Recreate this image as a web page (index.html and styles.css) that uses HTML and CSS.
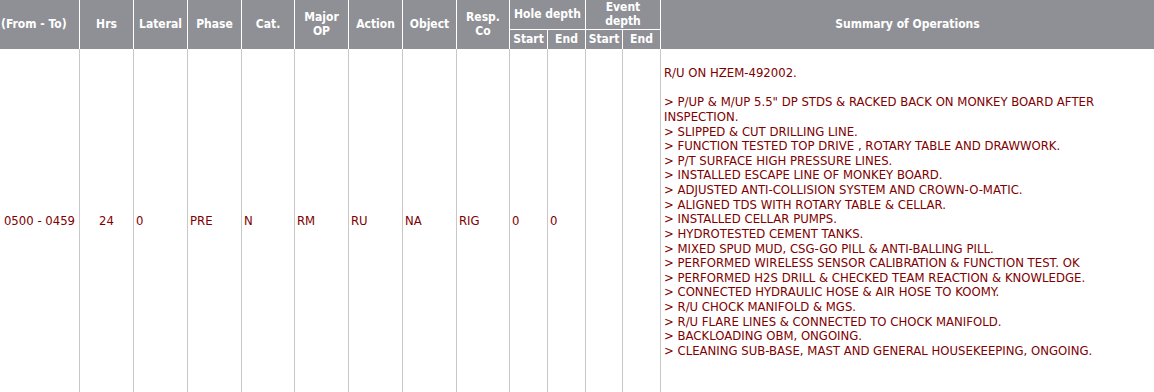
FILE: index.html
```html
<!DOCTYPE html>
<html lang="en">
<head>
<meta charset="utf-8">
<title>Operations</title>
<link rel="stylesheet" href="styles.css">
</head>
<body>
<div class="sheet">
  <div class="th span2 first">(From - To)</div>
  <div class="th span2">Hrs</div>
  <div class="th span2">Lateral</div>
  <div class="th span2">Phase</div>
  <div class="th span2">Cat.</div>
  <div class="th span2">Major<br>OP</div>
  <div class="th span2">Action</div>
  <div class="th span2">Object</div>
  <div class="th span2">Resp.<br>Co</div>
  <div class="th group">Hole depth</div>
  <div class="th group">Event<br>depth</div>
  <div class="th span2 summary-head">Summary of Operations</div>
  <div class="th sub">Start</div>
  <div class="th sub">End</div>
  <div class="th sub">Start</div>
  <div class="th sub">End</div>

  <div class="td center">0500 - 0459</div>
  <div class="td center">24</div>
  <div class="td">0</div>
  <div class="td">PRE</div>
  <div class="td">N</div>
  <div class="td">RM</div>
  <div class="td">RU</div>
  <div class="td">NA</div>
  <div class="td">RIG</div>
  <div class="td">0</div>
  <div class="td">0</div>
  <div class="td"></div>
  <div class="td"></div>
  <div class="td summary">R/U ON HZEM-492002.<br><br>&gt; P/UP &amp; M/UP 5.5" DP STDS &amp; RACKED BACK ON MONKEY BOARD AFTER INSPECTION.<br>&gt; SLIPPED &amp; CUT DRILLING LINE.<br>&gt; FUNCTION TESTED TOP DRIVE , ROTARY TABLE AND DRAWWORK.<br>&gt; P/T SURFACE HIGH PRESSURE LINES.<br>&gt; INSTALLED ESCAPE LINE OF MONKEY BOARD.<br>&gt; ADJUSTED ANTI-COLLISION SYSTEM AND CROWN-O-MATIC.<br>&gt; ALIGNED TDS WITH ROTARY TABLE &amp; CELLAR.<br>&gt; INSTALLED CELLAR PUMPS.<br>&gt; HYDROTESTED CEMENT TANKS.<br>&gt; MIXED SPUD MUD, CSG-GO PILL &amp; ANTI-BALLING PILL.<br>&gt; PERFORMED WIRELESS SENSOR CALIBRATION &amp; FUNCTION TEST. OK<br>&gt; PERFORMED H2S DRILL &amp; CHECKED TEAM REACTION &amp; KNOWLEDGE.<br>&gt; CONNECTED HYDRAULIC HOSE &amp; AIR HOSE TO KOOMY.<br>&gt; R/U CHOCK MANIFOLD &amp; MGS.<br>&gt; R/U FLARE LINES &amp; CONNECTED TO CHOCK MANIFOLD.<br>&gt; BACKLOADING OBM, ONGOING.<br>&gt; CLEANING SUB-BASE, MAST AND GENERAL HOUSEKEEPING, ONGOING.</div>
</div>
</body>
</html>
```

FILE: styles.css
```css
html, body {
  margin: 0;
  padding: 0;
  overflow: hidden;
  background: #ffffff;
}

.sheet {
  width: 1154px;
  display: grid;
  grid-template-columns: 80px 54px 54px 54px 53px 54px 54px 54px 53px 38px 38px 37px 38px 1fr;
  grid-template-rows: 30px 19px 343px;
  font-family: "DejaVu Sans Condensed", "DejaVu Sans", sans-serif;
  font-size: 12px;
}

.th {
  box-sizing: border-box;
  background: #8f9095;
  color: #ffffff;
  font-weight: bold;
  line-height: 13.5px;
  border-right: 1px solid #ffffff;
  display: flex;
  align-items: center;
  justify-content: center;
  text-align: center;
}

.span2 {
  grid-row: span 2;
}

.first {
  justify-content: flex-start;
  padding-left: 1px;
}

.group {
  grid-column: span 2;
  border-bottom: 1px solid #ffffff;
}

.summary-head {
  border-right: none;
}

.td {
  box-sizing: border-box;
  color: #800000;
  font-family: "DejaVu Sans", sans-serif;
  font-size: 11.7px;
  border-right: 1px solid #c8c8c8;
  display: flex;
  align-items: center;
  padding: 2px 0 0 2px;
  line-height: 14.63px;
}

.td.center {
  justify-content: center;
  padding-left: 0;
}

.td.summary {
  display: block;
  border-right: none;
  padding: 17px 0 0 3px;
}
```
